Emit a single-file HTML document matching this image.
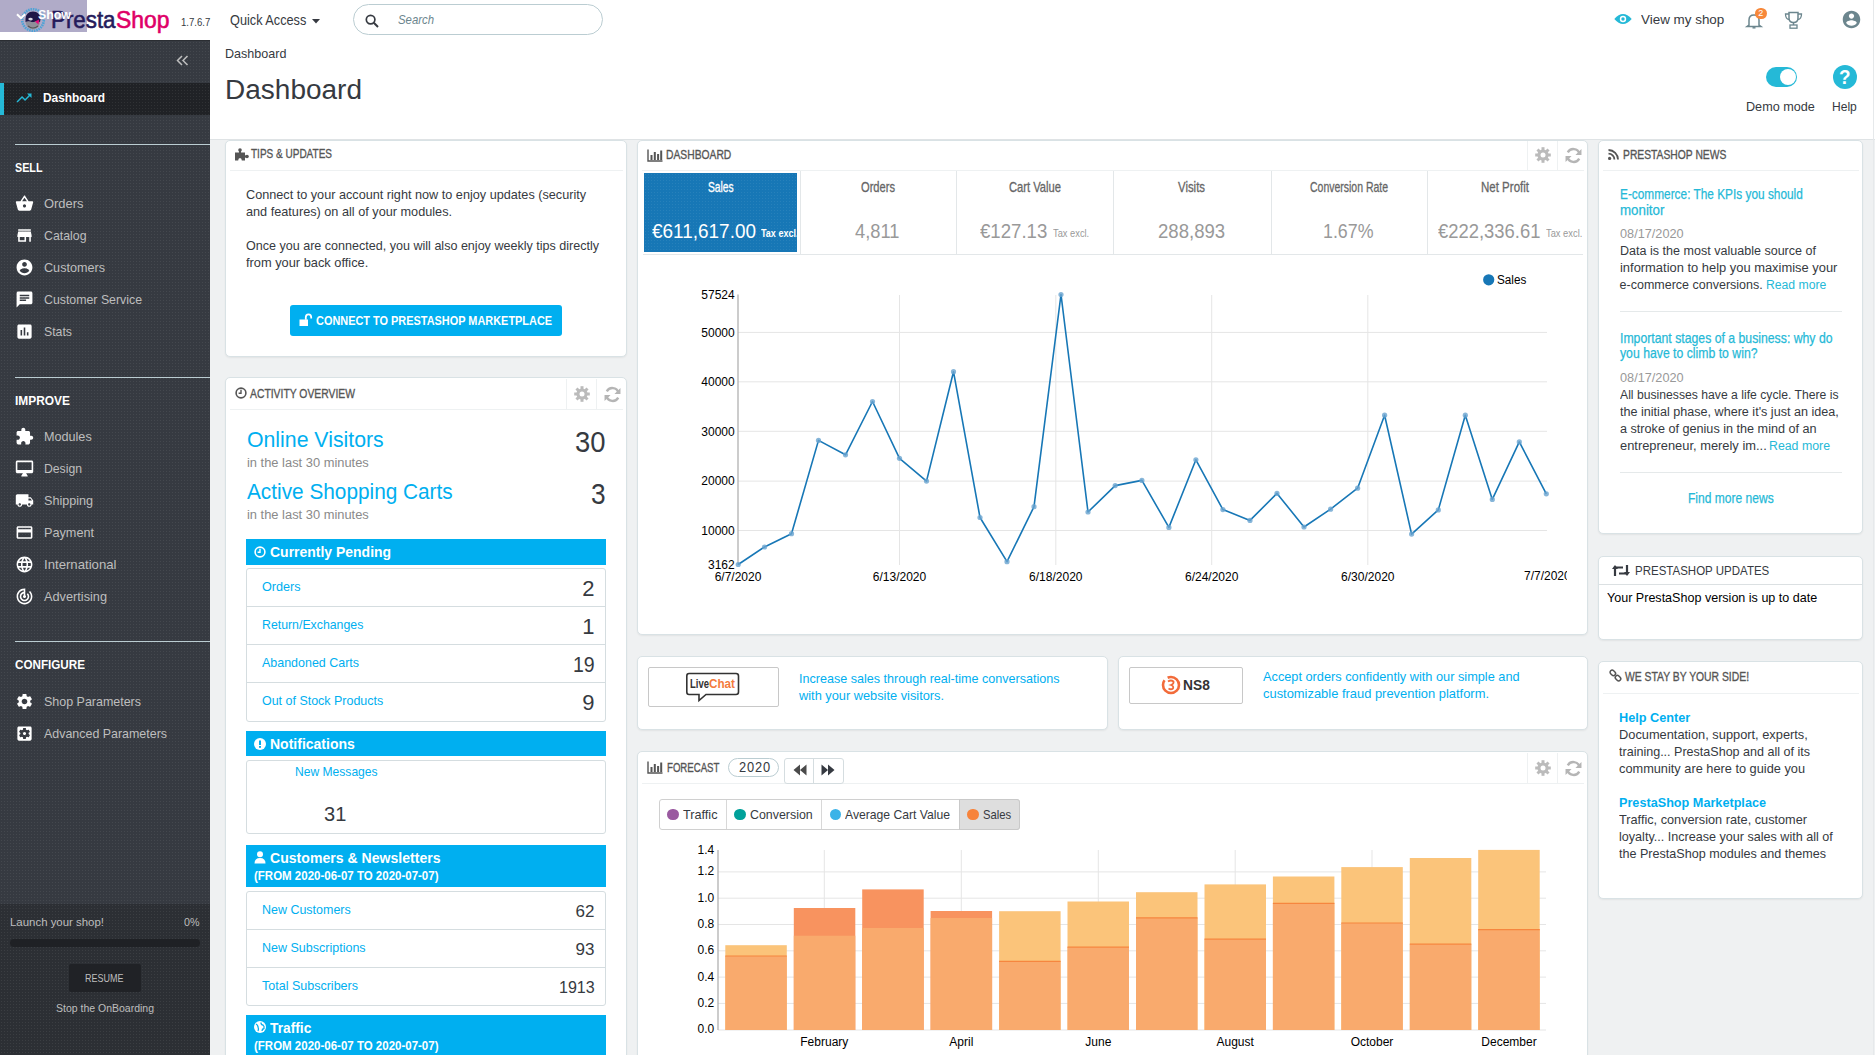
<!DOCTYPE html>
<html><head><meta charset="utf-8"><title>Dashboard</title>
<style>
*{box-sizing:border-box;margin:0;padding:0}
html,body{width:1875px;height:1055px;overflow:hidden}
body{font-family:"Liberation Sans",sans-serif;background:#eff1f2;position:relative}
.a{position:absolute}
.t{position:absolute;white-space:nowrap;transform-origin:0 0}
svg.a{overflow:visible}
</style></head><body>
<div class="a" style="left:0px;top:0px;width:1875px;height:40px;background:#fff"></div>
<div class="a" style="left:0px;top:0px;width:87px;height:32px;background:#b0abc8"></div>
<svg class="a" style="left:20px;top:7px" width="26" height="26" viewBox="0 0 26 26"><circle cx="13" cy="13" r="10.8" fill="none" stroke="#4ea3d6" stroke-width="2.6" stroke-dasharray="1.6 0.8"/><path d="M5.5 12 Q6 4.5 13 4.5 Q20 4.5 20.5 12 L20 15 Q16 14 13 15.5 Q9 14 5.5 15z" fill="#1f1747"/><path d="M5.5 15 Q9 14 13 15.5 Q16 14 20 15 Q19.5 22 13 22.5 Q6.5 22 5.5 15z" fill="#8f8f99"/><path d="M8 12 Q10.5 9.5 13 12 Q11 15 8 12z" fill="#d9d9e3"/><path d="M15 14.5 L19 12.5 L18.5 17.5z" fill="#e5067a"/><path d="M8 19 Q13 23 18 19" stroke="#555" stroke-width="1.2" fill="none"/></svg>
<div class="t" style="left:51.00px;top:4.70px;font-size:24px;line-height:30px;color:#251b5b;transform:scaleX(0.9299);-webkit-text-stroke:0.6px #251b5b">Presta</div>
<div class="t" style="left:115.60px;top:4.70px;font-size:24px;line-height:30px;color:#df0067;transform:scaleX(0.9545);-webkit-text-stroke:0.6px #df0067">Shop</div>
<svg class="a" style="left:16px;top:13px" width="10" height="7" viewBox="0 0 10 7"><path d="M1 1.2 L5 5.2 L9 1.2" stroke="#fff" stroke-width="2" fill="none"/></svg>
<div class="t" style="left:37.50px;top:7.30px;font-size:13px;line-height:16px;color:#fff;font-weight:bold;transform:scaleX(0.9520);">Show</div>
<div class="t" style="left:180.70px;top:15.30px;font-size:11px;line-height:14px;color:#363a41;transform:scaleX(0.8710);">1.7.6.7</div>
<div class="t" style="left:229.60px;top:11.30px;font-size:14px;line-height:18px;color:#363a41;transform:scaleX(0.9080);">Quick Access</div>
<svg class="a" style="left:311.5px;top:18.5px" width="8" height="5" viewBox="0 0 8 5"><path d="M0 0 L8 0 L4 4.5z" fill="#363a41"/></svg>
<div class="a" style="left:353px;top:4px;width:250px;height:31px;border:1px solid #bbcdd2;border-radius:16px"></div>
<svg class="a" style="left:365px;top:13.5px" width="14" height="14" viewBox="0 0 14 14"><circle cx="5.6" cy="5.6" r="4.3" stroke="#363a41" stroke-width="1.7" fill="none"/><path d="M8.8 8.8 L13 13" stroke="#363a41" stroke-width="2"/></svg>
<div class="t" style="left:398.00px;top:11.80px;font-size:13px;line-height:16px;color:#6c868e;font-style:italic;transform:scaleX(0.8740);">Search</div>
<svg class="a" style="left:1614px;top:12.5px" width="18" height="12" viewBox="0 0 18 12"><path d="M0.3 6 Q9 -4 17.7 6 Q9 16 0.3 6z" fill="#25b9d7"/><circle cx="9" cy="6" r="3.2" fill="#fff"/><circle cx="9" cy="6" r="1.7" fill="#25b9d7"/></svg>
<div class="t" style="left:1641.00px;top:10.80px;font-size:13.5px;line-height:17px;color:#363a41;transform:scaleX(0.9942);">View my shop</div>
<svg class="a" style="left:1746px;top:12px" width="16" height="17" viewBox="0 0 16 17"><path d="M3 13 V8 Q3 3 8 3 Q13 3 13 8 V13 L15 14.5 H1 Z" stroke="#6c868e" stroke-width="1.5" fill="none"/><path d="M6.5 15.8 h3" stroke="#6c868e" stroke-width="1.5"/></svg>
<div class="a" style="left:1755px;top:7.5px;width:11.5px;height:11.5px;border-radius:6px;background:#f7883a"></div>
<div class="t" style="left:1758.20px;top:7.80px;font-size:9px;line-height:11px;color:#fff;">2</div>
<svg class="a" style="left:1784px;top:11px" width="19" height="18" viewBox="0 0 19 18"><path d="M5 1.5 H14 V7 Q14 11.5 9.5 11.5 Q5 11.5 5 7 Z" stroke="#6c868e" stroke-width="1.5" fill="none"/><path d="M5 3 H1.5 Q1.5 8 5 8.5 M14 3 H17.5 Q17.5 8 14 8.5" stroke="#6c868e" stroke-width="1.3" fill="none"/><path d="M9.5 11.5 V14" stroke="#6c868e" stroke-width="1.5"/><rect x="6" y="14" width="7" height="3.2" stroke="#6c868e" stroke-width="1.3" fill="none"/></svg>
<svg class="a" style="left:1840.5px;top:9px" width="21" height="21" viewBox="0 0 24 24"><path d="M12 2C6.48 2 2 6.48 2 12s4.48 10 10 10 10-4.480 10-10S17.52 2 12 2zm0 3c1.66 0 3 1.34 3 3s-1.34 3-3 3-3-1.34-3-3 1.34-3 3-3zm0 14.2c-2.5 0-4.71-1.28-6-3.22.03-1.99 4-3.08 6-3.08 1.99 0 5.97 1.09 6 3.08-1.29 1.94-3.5 3.22-6 3.22z" fill="#6c868e"/></svg>
<div class="a" style="left:210px;top:40px;width:1665px;height:100px;background:#fff;border-bottom:1px solid #dfe3e5"></div>
<div class="t" style="left:225.30px;top:45.50px;font-size:13px;line-height:16px;color:#363a41;transform:scaleX(0.9655);">Dashboard</div>
<div class="t" style="left:225.00px;top:73.00px;font-size:27px;line-height:34px;color:#363a41;transform:scaleX(1.0372);">Dashboard</div>
<div class="a" style="left:1765.5px;top:67px;width:31.5px;height:20px;border-radius:10px;background:#25b9d7"></div>
<div class="a" style="left:1779.5px;top:69px;width:16px;height:16px;border-radius:8px;background:#fff"></div>
<div class="t" style="left:1745.80px;top:99.00px;font-size:13px;line-height:16px;color:#363a41;transform:scaleX(0.9716);">Demo mode</div>
<div class="a" style="left:1833px;top:65px;width:24px;height:24px;border-radius:12px;background:#25b9d7"></div>
<div class="t" style="left:1839.45px;top:64.90px;font-size:20px;line-height:25px;color:#fff;font-weight:bold;transform:scaleX(0.9413);">?</div>
<div class="t" style="left:1832.40px;top:99.00px;font-size:13px;line-height:16px;color:#363a41;transform:scaleX(0.9276);">Help</div>
<div class="a" style="left:1873px;top:0px;width:1px;height:1055px;background:#e6e9eb"></div>
<div class="a" style="left:0px;top:40px;width:210px;height:1015px;background-color:#363a41;background-image:radial-gradient(rgba(255,255,255,.07) 0.7px,transparent 1px);background-size:3px 3px;border-top:1px solid #2a2d32"></div>
<svg class="a" style="left:176px;top:55px" width="13" height="11" viewBox="0 0 13 11"><path d="M6 1 L1.5 5.5 L6 10 M11.5 1 L7 5.5 L11.5 10" stroke="#bebebe" stroke-width="1.5" fill="none"/></svg>
<div class="a" style="left:0px;top:83px;width:210px;height:32px;background-color:#202226;background-image:radial-gradient(rgba(255,255,255,.07) 0.7px,transparent 1px);background-size:3px 3px;"></div>
<div class="a" style="left:0px;top:83px;width:4px;height:32px;background:#25b9d7"></div>
<svg class="a" style="left:15px;top:89px" width="18" height="18" viewBox="0 0 24 24"><path d="M16 6l2.29 2.29-4.88 4.88-4-4L2 16.59 3.41 18l6-6 4 4 6.3-6.29L22 12V6z" fill="#25b9d7"/></svg>
<div class="t" style="left:43.20px;top:90.40px;font-size:13px;line-height:16px;color:#fff;font-weight:bold;transform:scaleX(0.9131);">Dashboard</div>
<div class="a" style="left:15px;top:144px;width:195px;height:1px;background:#bbcdd2"></div>
<div class="a" style="left:15px;top:377px;width:195px;height:1px;background:#bbcdd2"></div>
<div class="a" style="left:15px;top:641px;width:195px;height:1px;background:#bbcdd2"></div>
<div class="t" style="left:15.00px;top:159.60px;font-size:12.5px;line-height:16px;color:#fff;font-weight:bold;transform:scaleX(0.8608);">SELL</div>
<div class="t" style="left:15.00px;top:392.50px;font-size:12.5px;line-height:16px;color:#fff;font-weight:bold;transform:scaleX(0.9541);">IMPROVE</div>
<div class="t" style="left:15.00px;top:657.00px;font-size:12.5px;line-height:16px;color:#fff;font-weight:bold;transform:scaleX(0.9333);">CONFIGURE</div>
<svg class="a" style="left:14.5px;top:194px" width="19" height="19" viewBox="0 0 24 24"><path d="M17.21 9l-4.38-6.56c-.19-.28-.51-.42-.83-.42-.32 0-.64.14-.83.43L6.79 9H2c-.55 0-1 .45-1 1 0 .09.01.18.04.27l2.540 9.27c.23.84 1 1.46 1.92 1.46h13c.92 0 1.69-.62 1.93-1.46l2.54-9.27L23 10c0-.55-.45-1-1-1h-4.79zM9 9l3-4.4L15 9H9zm3 8c-1.1 0-2-.9-2-2s.9-2 2-2 2 .9 2 2-.9 2-2 2z" fill="#fff"/></svg>
<div class="t" style="left:44.30px;top:196.20px;font-size:13px;line-height:16px;color:#bebebe;transform:scaleX(0.9942);">Orders</div>
<svg class="a" style="left:14.5px;top:226px" width="19" height="19" viewBox="0 0 24 24"><path d="M20 4H4v2h16V4zm1 10v-2l-1-5H4l-1 5v2h1v6h10v-6h4v6h2v-6h1zm-9 4H6v-4h6v4z" fill="#fff"/></svg>
<div class="t" style="left:44.30px;top:228.20px;font-size:13px;line-height:16px;color:#bebebe;transform:scaleX(0.9485);">Catalog</div>
<svg class="a" style="left:14.5px;top:258px" width="19" height="19" viewBox="0 0 24 24"><path d="M12 2C6.48 2 2 6.48 2 12s4.48 10 10 10 10-4.480 10-10S17.52 2 12 2zm0 3c1.66 0 3 1.34 3 3s-1.34 3-3 3-3-1.34-3-3 1.34-3 3-3zm0 14.2c-2.5 0-4.71-1.28-6-3.22.03-1.99 4-3.08 6-3.08 1.99 0 5.97 1.09 6 3.08-1.29 1.94-3.5 3.22-6 3.22z" fill="#fff"/></svg>
<div class="t" style="left:44.30px;top:260.20px;font-size:13px;line-height:16px;color:#bebebe;transform:scaleX(0.9706);">Customers</div>
<svg class="a" style="left:14.5px;top:290px" width="19" height="19" viewBox="0 0 24 24"><path d="M20 2H4c-1.1 0-1.99.9-1.99 2L2 22l4-4h14c1.1 0 2-.9 2-2V4c0-1.1-.9-2-2-2zM6 9h12v2H6V9zm8 5H6v-2h8v2zm4-6H6V6h12v2z" fill="#fff"/></svg>
<div class="t" style="left:44.30px;top:292.20px;font-size:13px;line-height:16px;color:#bebebe;transform:scaleX(0.9486);">Customer Service</div>
<svg class="a" style="left:14.5px;top:322px" width="19" height="19" viewBox="0 0 24 24"><path d="M19 3H5c-1.1 0-2 .9-2 2v14c0 1.1.9 2 2 2h14c1.1 0 2-.9 2-2V5c0-1.1-.9-2-2-2zM9 17H7v-7h2v7zm4 0h-2V7h2v10zm4 0h-2v-4h2v4z" fill="#fff"/></svg>
<div class="t" style="left:44.30px;top:324.20px;font-size:13px;line-height:16px;color:#bebebe;transform:scaleX(0.9452);">Stats</div>
<svg class="a" style="left:14.5px;top:427px" width="19" height="19" viewBox="0 0 24 24"><path d="M20.5 11H19V7c0-1.1-.9-2-2-2h-4V3.5C13 2.12 11.88 1 10.5 1S8 2.12 8 3.5V5H4c-1.1 0-1.99.9-1.99 2v3.8H3.5c1.49 0 2.7 1.21 2.7 2.7s-1.21 2.7-2.7 2.7H2V20c0 1.1.9 2 2 2h3.8v-1.5c0-1.49 1.21-2.7 2.7-2.7 1.49 0 2.7 1.21 2.7 2.7V22H17c1.1 0 2-.9 2-2v-4h1.5c1.38 0 2.5-1.12 2.5-2.5S21.88 11 20.5 11z" fill="#fff"/></svg>
<div class="t" style="left:44.30px;top:429.20px;font-size:13px;line-height:16px;color:#bebebe;transform:scaleX(0.9708);">Modules</div>
<svg class="a" style="left:14.5px;top:459px" width="19" height="19" viewBox="0 0 24 24"><path d="M21 2H3c-1.1 0-2 .9-2 2v12c0 1.1.9 2 2 2h7l-2 3v1h8v-1l-2-3h7c1.1 0 2-.9 2-2V4c0-1.1-.9-2-2-2zm0 12H3V4h18v10z" fill="#fff"/></svg>
<div class="t" style="left:44.30px;top:461.20px;font-size:13px;line-height:16px;color:#bebebe;transform:scaleX(0.9391);">Design</div>
<svg class="a" style="left:14.5px;top:491px" width="19" height="19" viewBox="0 0 24 24"><path d="M20 8h-3V4H3c-1.1 0-2 .9-2 2v11h2c0 1.66 1.34 3 3 3s3-1.34 3-3h6c0 1.66 1.34 3 3 3s3-1.34 3-3h2v-5l-3-4zM6 18.5c-.83 0-1.5-.67-1.5-1.5s.67-1.5 1.5-1.5 1.5.67 1.5 1.5-.67 1.5-1.5 1.5zm13.5-9l1.96 2.5H17V9.5h2.5zm-1.5 9c-.83 0-1.5-.67-1.5-1.5s.67-1.5 1.5-1.5 1.5.67 1.5 1.5-.67 1.5-1.5 1.5z" fill="#fff"/></svg>
<div class="t" style="left:44.30px;top:493.20px;font-size:13px;line-height:16px;color:#bebebe;transform:scaleX(0.9684);">Shipping</div>
<svg class="a" style="left:14.5px;top:523px" width="19" height="19" viewBox="0 0 24 24"><path d="M20 4H4c-1.11 0-1.99.89-1.99 2L2 18c0 1.11.89 2 2 2h16c1.11 0 2-.89 2-2V6c0-1.11-.89-2-2-2zm0 14H4v-6h16v6zm0-10H4V6h16v2z" fill="#fff"/></svg>
<div class="t" style="left:44.30px;top:525.20px;font-size:13px;line-height:16px;color:#bebebe;transform:scaleX(0.9746);">Payment</div>
<svg class="a" style="left:14.5px;top:555px" width="19" height="19" viewBox="0 0 24 24"><path d="M11.99 2C6.47 2 2 6.48 2 12s4.47 10 9.99 10C17.52 22 22 17.52 22 12S17.52 2 11.99 2zm6.93 6h-2.95c-.32-1.25-.78-2.45-1.38-3.560 1.84.63 3.37 1.91 4.33 3.56zM12 4.04c.83 1.2 1.48 2.53 1.91 3.96h-3.82c.43-1.43 1.08-2.76 1.91-3.96zM4.26 14C4.1 13.36 4 12.69 4 12s.1-1.36.26-2h3.38c-.08.66-.14 1.32-.14 2 0 .68.06 1.34.14 2H4.26zm.82 2h2.95c.32 1.25.78 2.45 1.38 3.56-1.84-.63-3.37-1.9-4.33-3.56zm2.95-8H5.08c.96-1.66 2.49-2.93 4.33-3.56C8.81 5.55 8.35 6.75 8.03 8zM12 19.96c-.83-1.2-1.48-2.53-1.910-3.96h3.82c-.43 1.43-1.08 2.76-1.91 3.96zM14.34 14H9.66c-.09-.66-.16-1.32-.16-2 0-.68.07-1.35.16-2h4.68c.09.65.16 1.32.16 2 0 .68-.07 1.34-.16 2zm.25 5.56c.6-1.11 1.06-2.31 1.38-3.56h2.95c-.96 1.65-2.49 2.93-4.33 3.56zM16.36 14c.08-.66.14-1.32.14-2 0-.68-.06-1.34-.14-2h3.38c.16.64.26 1.31.26 2s-.1 1.36-.26 2h-3.38z" fill="#fff"/></svg>
<div class="t" style="left:44.30px;top:557.20px;font-size:13px;line-height:16px;color:#bebebe;transform:scaleX(1.0133);">International</div>
<svg class="a" style="left:14.5px;top:587px" width="19" height="19" viewBox="0 0 24 24"><path d="M19.07 4.93l-1.41 1.41C19.1 7.79 20 9.79 20 12c0 4.42-3.58 8-8 8s-8-3.58-8-8c0-4.08 3.05-7.44 7-7.93v2.02C8.16 6.57 6 9.03 6 12c0 3.31 2.69 6 6 6s6-2.69 6-6c0-1.66-.67-3.160-1.76-4.24l-1.41 1.41C15.55 9.9 16 10.9 16 12c0 2.21-1.79 4-4 4s-4-1.79-4-4c0-1.86 1.28-3.41 3-3.86v2.14c-.6.35-1 .98-1 1.72 0 1.1.9 2 2 2s2-.9 2-2c0-.74-.4-1.38-1-1.72V2h-1C6.48 2 2 6.48 2 12s4.48 10 10 10 10-4.48 10-10c0-2.76-1.12-5.26-2.93-7.07z" fill="#fff"/></svg>
<div class="t" style="left:44.30px;top:589.20px;font-size:13px;line-height:16px;color:#bebebe;transform:scaleX(0.9797);">Advertising</div>
<svg class="a" style="left:14.5px;top:692px" width="19" height="19" viewBox="0 0 24 24"><path d="M19.14 12.94c.04-.3.06-.61.06-.94 0-.32-.02-.64-.07-.94l2.03-1.58c.18-.14.23-.41.12-.61l-1.92-3.32c-.12-.22-.37-.29-.59-.22l-2.39.96c-.5-.38-1.03-.7-1.62-.94l-.36-2.54c-.04-.24-.24-.41-.48-.41h-3.84c-.24 0-.43.17-.47.41l-.36 2.54c-.59.24-1.13.57-1.62.94l-2.39-.96c-.22-.08-.47 0-.59.22L2.74 8.87c-.12.21-.08.47.12.61l2.03 1.58c-.05.3-.09.63-.09.94s.02.64.07.94l-2.03 1.58c-.18.14-.23.41-.12.61l1.92 3.32c.12.22.37.29.59.22l2.39-.96c.5.38 1.03.7 1.62.94l.36 2.54c.05.24.24.41.48.41h3.84c.24 0 .44-.17.47-.41l.36-2.54c.59-.24 1.13-.56 1.62-.94l2.39.96c.22.08.47 0 .59-.22l1.92-3.32c.12-.22.07-.47-.12-.61l-2.01-1.58zM12 15.6c-1.98 0-3.6-1.62-3.6-3.6s1.62-3.6 3.6-3.6 3.6 1.62 3.6 3.6-1.62 3.6-3.6 3.6z" fill="#fff"/></svg>
<div class="t" style="left:44.30px;top:694.20px;font-size:13px;line-height:16px;color:#bebebe;transform:scaleX(0.9589);">Shop Parameters</div>
<svg class="a" style="left:14.5px;top:724px" width="19" height="19" viewBox="0 0 24 24"><path d="M12 10c-1.1 0-2 .9-2 2s.9 2 2 2 2-.9 2-2-.9-2-2-2zm7-7H5c-1.11 0-2 .9-2 2v14c0 1.1.89 2 2 2h14c1.11 0 2-.9 2-2V5c0-1.1-.89-2-2-2zm-1.75 9c0 .23-.02.46-.05.68l1.48 1.16c.13.11.17.3.08.45l-1.4 2.42c-.09.15-.27.21-.43.15l-1.74-.7c-.36.28-.76.51-1.18.69l-.26 1.85c-.03.17-.18.3-.35.3h-2.8c-.17 0-.32-.13-.35-.29l-.26-1.85c-.43-.18-.82-.41-1.18-.69l-1.74.7c-.16.06-.34 0-.43-.15l-1.4-2.42c-.09-.15-.05-.34.08-.45l1.48-1.16c-.03-.23-.05-.46-.05-.69 0-.23.02-.46.05-.68l-1.48-1.16c-.13-.11-.17-.3-.08-.45l1.4-2.42c.09-.15.27-.21.43-.15l1.74.7c.36-.28.76-.51 1.18-.69l.26-1.85c.03-.17.18-.3.35-.3h2.8c.17 0 .32.13.35.29l.26 1.85c.43.18.82.41 1.18.69l1.74-.7c.16-.06.34 0 .43.15l1.4 2.42c.09.15.05.34-.08.45l-1.48 1.16c.03.23.05.46.05.69z" fill="#fff"/></svg>
<div class="t" style="left:44.30px;top:726.20px;font-size:13px;line-height:16px;color:#bebebe;transform:scaleX(0.9563);">Advanced Parameters</div>
<div class="a" style="left:0px;top:904px;width:210px;height:151px;background-color:#2c2f34;background-image:radial-gradient(rgba(255,255,255,.07) 0.7px,transparent 1px);background-size:3px 3px;"></div>
<div class="t" style="left:10.00px;top:915.00px;font-size:11px;line-height:14px;color:#bebebe;transform:scaleX(1.0386);">Launch your shop!</div>
<div class="t" style="left:184.00px;top:915.00px;font-size:11px;line-height:14px;color:#bebebe;transform:scaleX(0.9749);">0%</div>
<div class="a" style="left:10px;top:939px;width:190px;height:8px;border-radius:4px;background:#1f2125"></div>
<div class="a" style="left:69px;top:964px;width:72px;height:28px;border-radius:2px;background:#202226"></div>
<div class="t" style="left:85.25px;top:971.80px;font-size:10.5px;line-height:13px;color:#bebebe;transform:scaleX(0.8570);">RESUME</div>
<div class="t" style="left:56.00px;top:1000.50px;font-size:11px;line-height:14px;color:#bebebe;transform:scaleX(0.9539);">Stop the OnBoarding</div>
<div class="a" style="left:225px;top:139.5px;width:402px;height:217px;background:#fff;border:1px solid #d9e2e5;border-radius:5px;box-shadow:0 1px 2px rgba(0,0,0,.06);"></div>
<div class="a" style="left:230px;top:170px;width:393px;height:1px;background:#eef1f2"></div>
<svg class="a" style="left:234.6px;top:148px" width="14" height="13" viewBox="0 0 14 13"><circle cx="5" cy="2" r="1.8" fill="#555"/><rect x="4" y="2" width="2" height="3" fill="#555"/><path d="M0 4.5 H10 V7.5 H11 V9.5 H10 V12.5 H6.8 Q6.8 10 5 10 Q3.2 10 3.2 12.5 H0 Z" fill="#555"/><circle cx="12" cy="8.5" r="1.8" fill="#555"/></svg>
<div class="t" style="left:251.00px;top:145.00px;font-size:13.6px;line-height:17px;color:#555;transform:scaleX(0.7362);-webkit-text-stroke:0.35px #555">TIPS &amp; UPDATES</div>
<div class="t" style="left:246.20px;top:187.00px;font-size:13px;line-height:16px;color:#363a41;transform:scaleX(0.9744);">Connect to your account right now to enjoy updates (security</div>
<div class="t" style="left:246.20px;top:203.80px;font-size:13px;line-height:16px;color:#363a41;transform:scaleX(0.9763);">and features) on all of your modules.</div>
<div class="t" style="left:246.20px;top:237.90px;font-size:13px;line-height:16px;color:#363a41;transform:scaleX(0.9655);">Once you are connected, you will also enjoy weekly tips directly</div>
<div class="t" style="left:246.20px;top:254.80px;font-size:13px;line-height:16px;color:#363a41;transform:scaleX(0.9860);">from your back office.</div>
<div class="a" style="left:290px;top:305px;width:271.5px;height:30.5px;background:#00aff0;border-radius:3px"></div>
<svg class="a" style="left:299px;top:313px" width="14" height="14" viewBox="0 0 14 14"><rect x="0.5" y="6.5" width="8.5" height="6.5" fill="#fff"/><path d="M6.8 6.8 V4.2 Q6.8 1.3 9.5 1.3 Q12.2 1.3 12.2 4.2 V5.5" stroke="#fff" stroke-width="1.8" fill="none"/></svg>
<div class="t" style="left:315.90px;top:312.50px;font-size:13px;line-height:16px;color:#fff;font-weight:bold;transform:scaleX(0.8403);">CONNECT TO PRESTASHOP MARKETPLACE</div>
<div class="a" style="left:225px;top:377px;width:402px;height:700px;background:#fff;border:1px solid #d9e2e5;border-radius:5px;box-shadow:0 1px 2px rgba(0,0,0,.06);"></div>
<div class="a" style="left:230px;top:409px;width:393px;height:1px;background:#eef1f2"></div>
<svg class="a" style="left:235px;top:387px" width="12" height="12" viewBox="0 0 12 12"><circle cx="6" cy="6" r="4.9" stroke="#555" stroke-width="1.6" fill="none"/><path d="M6 2.8 V6.3 H3.6" stroke="#555" stroke-width="1.4" fill="none"/></svg>
<div class="t" style="left:249.80px;top:384.70px;font-size:13.6px;line-height:17px;color:#555;transform:scaleX(0.7625);-webkit-text-stroke:0.35px #555">ACTIVITY OVERVIEW</div>
<div class="a" style="left:566px;top:379px;width:1px;height:30px;background:#eef1f2"></div>
<div class="a" style="left:596px;top:379px;width:1px;height:30px;background:#eef1f2"></div>
<svg class="a" style="left:574px;top:386px" width="16" height="16" viewBox="0 0 16 16"><rect x="6.5" y="0.2" width="3" height="3.5" fill="#bbb" transform="rotate(0 8 8)"/><rect x="6.5" y="0.2" width="3" height="3.5" fill="#bbb" transform="rotate(45 8 8)"/><rect x="6.5" y="0.2" width="3" height="3.5" fill="#bbb" transform="rotate(90 8 8)"/><rect x="6.5" y="0.2" width="3" height="3.5" fill="#bbb" transform="rotate(135 8 8)"/><rect x="6.5" y="0.2" width="3" height="3.5" fill="#bbb" transform="rotate(180 8 8)"/><rect x="6.5" y="0.2" width="3" height="3.5" fill="#bbb" transform="rotate(225 8 8)"/><rect x="6.5" y="0.2" width="3" height="3.5" fill="#bbb" transform="rotate(270 8 8)"/><rect x="6.5" y="0.2" width="3" height="3.5" fill="#bbb" transform="rotate(315 8 8)"/><circle cx="8" cy="8" r="5.6" fill="#bbb"/><circle cx="8" cy="8" r="2.5" fill="#fff"/></svg>
<svg class="a" style="left:603.5px;top:386px" width="17" height="17" viewBox="0 0 16 16"><path d="M13.6 6.2 A6 6 0 0 0 2.6 5 M2.4 9.8 A6 6 0 0 0 13.4 11" stroke="#b5b5b5" stroke-width="2.2" fill="none"/><path d="M15.5 1.8 V7.5 H9.8z M0.5 14.2 V8.5 H6.2z" fill="#b5b5b5"/></svg>
<div class="t" style="left:246.50px;top:425.70px;font-size:22px;line-height:28px;color:#00aff0;transform:scaleX(0.9665);">Online Visitors</div>
<div class="t" style="left:575.00px;top:424.00px;font-size:29px;line-height:36px;color:#363a41;transform:scaleX(0.9455);">30</div>
<div class="t" style="left:246.50px;top:454.90px;font-size:12.5px;line-height:16px;color:#8a8a8a;transform:scaleX(1.0311);">in the last 30 minutes</div>
<div class="t" style="left:246.50px;top:478.10px;font-size:22px;line-height:28px;color:#00aff0;transform:scaleX(0.9450);">Active Shopping Carts</div>
<div class="t" style="left:590.90px;top:476.40px;font-size:29px;line-height:36px;color:#363a41;transform:scaleX(0.9052);">3</div>
<div class="t" style="left:246.50px;top:507.00px;font-size:12.5px;line-height:16px;color:#8a8a8a;transform:scaleX(1.0311);">in the last 30 minutes</div>
<div class="a" style="left:245.8px;top:539.2px;width:360.2px;height:25.6px;background:#00aff0"></div>
<svg class="a" style="left:254px;top:546px" width="12" height="12" viewBox="0 0 12 12"><circle cx="6" cy="6" r="4.9" stroke="#fff" stroke-width="1.6" fill="none"/><path d="M6 2.8 V6.3 H3.6" stroke="#fff" stroke-width="1.4" fill="none"/></svg>
<div class="t" style="left:269.70px;top:542.30px;font-size:15px;line-height:19px;color:#fff;font-weight:bold;transform:scaleX(0.9315);">Currently Pending</div>
<div class="a" style="left:245.8px;top:568.4px;width:360.2px;height:153.5px;background:#fff;border:1px solid #d5dde0;border-radius:3px"></div>
<div class="t" style="left:262.00px;top:579.40px;font-size:13px;line-height:16px;color:#00aff0;transform:scaleX(0.9716);">Orders</div>
<div class="t" style="left:582.26px;top:574.90px;font-size:22px;line-height:28px;color:#363a41;">2</div>
<div class="a" style="left:246.8px;top:606.4px;width:358.2px;height:1px;background:#d5dde0"></div>
<div class="t" style="left:262.00px;top:617.40px;font-size:13px;line-height:16px;color:#00aff0;transform:scaleX(0.9472);">Return/Exchanges</div>
<div class="t" style="left:582.26px;top:612.90px;font-size:22px;line-height:28px;color:#363a41;">1</div>
<div class="a" style="left:246.8px;top:644.4px;width:358.2px;height:1px;background:#d5dde0"></div>
<div class="t" style="left:262.00px;top:655.40px;font-size:13px;line-height:16px;color:#00aff0;transform:scaleX(0.9587);">Abandoned Carts</div>
<div class="t" style="left:572.80px;top:650.90px;font-size:22px;line-height:28px;color:#363a41;transform:scaleX(0.8868);">19</div>
<div class="a" style="left:246.8px;top:682.4px;width:358.2px;height:1px;background:#d5dde0"></div>
<div class="t" style="left:262.00px;top:693.40px;font-size:13px;line-height:16px;color:#00aff0;transform:scaleX(0.9585);">Out of Stock Products</div>
<div class="t" style="left:582.26px;top:688.90px;font-size:22px;line-height:28px;color:#363a41;">9</div>
<div class="a" style="left:245.8px;top:731.1px;width:360.2px;height:25.4px;background:#00aff0"></div>
<svg class="a" style="left:254px;top:738px" width="12" height="12" viewBox="0 0 12 12"><circle cx="6" cy="6" r="6" fill="#fff"/><rect x="5" y="2.5" width="2" height="4.5" fill="#00aff0"/><rect x="5" y="8" width="2" height="1.8" fill="#00aff0"/></svg>
<div class="t" style="left:269.70px;top:734.30px;font-size:15px;line-height:19px;color:#fff;font-weight:bold;transform:scaleX(0.9336);">Notifications</div>
<div class="a" style="left:245.8px;top:760.3px;width:360.2px;height:74px;background:#fff;border:1px solid #d5dde0;border-radius:3px"></div>
<div class="t" style="left:295.10px;top:764.40px;font-size:13px;line-height:16px;color:#00aff0;transform:scaleX(0.9295);">New Messages</div>
<div class="t" style="left:324.30px;top:800.70px;font-size:21px;line-height:26px;color:#363a41;transform:scaleX(0.9547);">31</div>
<div class="a" style="left:245.8px;top:845.4px;width:360.2px;height:41.3px;background:#00aff0"></div>
<svg class="a" style="left:254px;top:851px" width="12" height="13" viewBox="0 0 12 13"><circle cx="6" cy="3.3" r="3" fill="#fff"/><path d="M0.5 12.5 Q0.5 7 6 7 Q11.5 7 11.5 12.5z" fill="#fff"/></svg>
<div class="t" style="left:269.70px;top:848.00px;font-size:15px;line-height:19px;color:#fff;font-weight:bold;transform:scaleX(0.9388);">Customers &amp; Newsletters</div>
<div class="t" style="left:253.50px;top:867.60px;font-size:12.5px;line-height:16px;color:#fff;font-weight:bold;transform:scaleX(0.9199);">(FROM 2020-06-07 TO 2020-07-07)</div>
<div class="a" style="left:245.8px;top:890.5px;width:360.2px;height:115.5px;background:#fff;border:1px solid #d5dde0;border-radius:3px"></div>
<div class="t" style="left:262.00px;top:901.50px;font-size:13px;line-height:16px;color:#00aff0;transform:scaleX(0.9593);">New Customers</div>
<div class="t" style="left:575.59px;top:900.50px;font-size:17px;line-height:21px;color:#363a41;">62</div>
<div class="a" style="left:246.8px;top:928.5px;width:358.2px;height:1px;background:#d5dde0"></div>
<div class="t" style="left:262.00px;top:939.50px;font-size:13px;line-height:16px;color:#00aff0;transform:scaleX(0.9623);">New Subscriptions</div>
<div class="t" style="left:575.59px;top:938.50px;font-size:17px;line-height:21px;color:#363a41;">93</div>
<div class="a" style="left:246.8px;top:966.5px;width:358.2px;height:1px;background:#d5dde0"></div>
<div class="t" style="left:262.00px;top:977.50px;font-size:13px;line-height:16px;color:#00aff0;transform:scaleX(0.9628);">Total Subscribers</div>
<div class="t" style="left:558.80px;top:976.50px;font-size:17px;line-height:21px;color:#363a41;transform:scaleX(0.9440);">1913</div>
<div class="a" style="left:245.8px;top:1015.3px;width:360.2px;height:45px;background:#00aff0"></div>
<svg class="a" style="left:254px;top:1021px" width="12" height="12" viewBox="0 0 12 12"><circle cx="6" cy="6" r="6" fill="#fff"/><path d="M2 3 Q4 4 4 6 Q5 8 4 10 M7 1.5 Q7 4 9 4 Q10.5 5 10 7.5 Q8 8 8 10" stroke="#00aff0" stroke-width="1.3" fill="none"/></svg>
<div class="t" style="left:269.70px;top:1017.90px;font-size:15px;line-height:19px;color:#fff;font-weight:bold;transform:scaleX(0.9175);">Traffic</div>
<div class="t" style="left:253.50px;top:1037.50px;font-size:12.5px;line-height:16px;color:#fff;font-weight:bold;transform:scaleX(0.9199);">(FROM 2020-06-07 TO 2020-07-07)</div>
<div class="a" style="left:637px;top:139.5px;width:951px;height:495.5px;background:#fff;border:1px solid #d9e2e5;border-radius:5px;box-shadow:0 1px 2px rgba(0,0,0,.06);"></div>
<div class="a" style="left:642px;top:170px;width:942px;height:1px;background:#eef1f2"></div>
<svg class="a" style="left:646.5px;top:148.5px" width="16" height="13" viewBox="0 0 16 13"><path d="M1 0.5 V12 H15.5" stroke="#555" stroke-width="1.4" fill="none"/><rect x="3.5" y="6" width="2" height="5" fill="#555"/><rect x="6.8" y="3" width="2" height="8" fill="#555"/><rect x="10.1" y="5" width="2" height="6" fill="#555"/><rect x="13.2" y="1.5" width="2" height="9.5" fill="#555"/></svg>
<div class="t" style="left:666.00px;top:145.70px;font-size:13.6px;line-height:17px;color:#555;transform:scaleX(0.7583);-webkit-text-stroke:0.35px #555">DASHBOARD</div>
<div class="a" style="left:1527px;top:141px;width:1px;height:29px;background:#eef1f2"></div>
<div class="a" style="left:1557px;top:141px;width:1px;height:29px;background:#eef1f2"></div>
<svg class="a" style="left:1535px;top:147px" width="16" height="16" viewBox="0 0 16 16"><rect x="6.5" y="0.2" width="3" height="3.5" fill="#bbb" transform="rotate(0 8 8)"/><rect x="6.5" y="0.2" width="3" height="3.5" fill="#bbb" transform="rotate(45 8 8)"/><rect x="6.5" y="0.2" width="3" height="3.5" fill="#bbb" transform="rotate(90 8 8)"/><rect x="6.5" y="0.2" width="3" height="3.5" fill="#bbb" transform="rotate(135 8 8)"/><rect x="6.5" y="0.2" width="3" height="3.5" fill="#bbb" transform="rotate(180 8 8)"/><rect x="6.5" y="0.2" width="3" height="3.5" fill="#bbb" transform="rotate(225 8 8)"/><rect x="6.5" y="0.2" width="3" height="3.5" fill="#bbb" transform="rotate(270 8 8)"/><rect x="6.5" y="0.2" width="3" height="3.5" fill="#bbb" transform="rotate(315 8 8)"/><circle cx="8" cy="8" r="5.6" fill="#bbb"/><circle cx="8" cy="8" r="2.5" fill="#fff"/></svg>
<svg class="a" style="left:1564.5px;top:147px" width="17" height="17" viewBox="0 0 16 16"><path d="M13.6 6.2 A6 6 0 0 0 2.6 5 M2.4 9.8 A6 6 0 0 0 13.4 11" stroke="#b5b5b5" stroke-width="2.2" fill="none"/><path d="M15.5 1.8 V7.5 H9.8z M0.5 14.2 V8.5 H6.2z" fill="#b5b5b5"/></svg>
<div class="a" style="left:643px;top:254px;width:940px;height:1px;background:#e3e7e9"></div>
<div class="a" style="left:799.6px;top:171px;width:1px;height:83px;background:#e3e7e9"></div>
<div class="a" style="left:956.4px;top:171px;width:1px;height:83px;background:#e3e7e9"></div>
<div class="a" style="left:1113.2px;top:171px;width:1px;height:83px;background:#e3e7e9"></div>
<div class="a" style="left:1270.5px;top:171px;width:1px;height:83px;background:#e3e7e9"></div>
<div class="a" style="left:1426.5px;top:171px;width:1px;height:83px;background:#e3e7e9"></div>
<div class="a" style="left:643.9px;top:173.2px;width:153.1px;height:78.4px;background-color:#1777b6;background-image:radial-gradient(rgba(255,255,255,.07) 0.7px,transparent 1px);background-size:3px 3px;"></div>
<div class="t" style="left:707.55px;top:178.30px;font-size:14.5px;line-height:18px;color:#fff;transform:scaleX(0.7086);-webkit-text-stroke:0.3px #fff">Sales</div>
<div class="t" style="left:861.00px;top:178.30px;font-size:14.5px;line-height:18px;color:#666;transform:scaleX(0.7672);-webkit-text-stroke:0.3px #666">Orders</div>
<div class="t" style="left:1008.50px;top:178.30px;font-size:14.5px;line-height:18px;color:#666;transform:scaleX(0.7712);-webkit-text-stroke:0.3px #666">Cart Value</div>
<div class="t" style="left:1178.20px;top:178.30px;font-size:14.5px;line-height:18px;color:#666;transform:scaleX(0.7853);-webkit-text-stroke:0.3px #666">Visits</div>
<div class="t" style="left:1309.50px;top:178.30px;font-size:14.5px;line-height:18px;color:#666;transform:scaleX(0.7222);-webkit-text-stroke:0.3px #666">Conversion Rate</div>
<div class="t" style="left:1481.00px;top:178.30px;font-size:14.5px;line-height:18px;color:#666;transform:scaleX(0.7942);-webkit-text-stroke:0.3px #666">Net Profit</div>
<div class="t" style="left:651.90px;top:218.50px;font-size:19.5px;line-height:24px;color:#fff;transform:scaleX(0.9720);">€611,617.00</div>
<div class="t" style="left:761.20px;top:227.00px;font-size:10.5px;line-height:13px;color:#fff;font-weight:bold;transform:scaleX(0.8604);">Tax excl.</div>
<div class="a" style="left:797px;top:173px;width:3px;height:79px;background:#fff"></div>
<div class="t" style="left:854.80px;top:218.50px;font-size:19.5px;line-height:24px;color:#999;transform:scaleX(0.9398);">4,811</div>
<div class="t" style="left:980.00px;top:218.50px;font-size:19.5px;line-height:24px;color:#999;transform:scaleX(0.9548);">€127.13</div>
<div class="t" style="left:1053.00px;top:227.00px;font-size:10.5px;line-height:13px;color:#999;transform:scaleX(0.8862);">Tax excl.</div>
<div class="t" style="left:1157.90px;top:218.50px;font-size:19.5px;line-height:24px;color:#999;transform:scaleX(0.9519);">288,893</div>
<div class="t" style="left:1323.00px;top:218.50px;font-size:19.5px;line-height:24px;color:#999;transform:scaleX(0.9133);">1.67%</div>
<div class="t" style="left:1437.50px;top:218.50px;font-size:19.5px;line-height:24px;color:#999;transform:scaleX(0.9443);">€222,336.61</div>
<div class="t" style="left:1545.80px;top:227.00px;font-size:10.5px;line-height:13px;color:#999;transform:scaleX(0.8887);">Tax excl.</div>
<svg class="a" style="left:0;top:0" width="1875" height="1055" viewBox="0 0 1875 1055"><line x1="738" y1="332.4" x2="1547" y2="332.4" stroke="#e5e5e5" stroke-width="1"/><line x1="738" y1="381.8" x2="1547" y2="381.8" stroke="#e5e5e5" stroke-width="1"/><line x1="738" y1="431.3" x2="1547" y2="431.3" stroke="#e5e5e5" stroke-width="1"/><line x1="738" y1="481.1" x2="1547" y2="481.1" stroke="#e5e5e5" stroke-width="1"/><line x1="738" y1="530.5" x2="1547" y2="530.5" stroke="#e5e5e5" stroke-width="1"/><line x1="899.5" y1="295" x2="899.5" y2="565" stroke="#e5e5e5" stroke-width="1"/><line x1="1055.8" y1="295" x2="1055.8" y2="565" stroke="#e5e5e5" stroke-width="1"/><line x1="1211.7" y1="295" x2="1211.7" y2="565" stroke="#e5e5e5" stroke-width="1"/><line x1="1367.8" y1="295" x2="1367.8" y2="565" stroke="#e5e5e5" stroke-width="1"/><line x1="738" y1="294.5" x2="738" y2="565" stroke="#aaa" stroke-width="1.2"/><polyline points="738.2,564.5 764.5,547 791.5,533.7 818.5,440.4 845.5,454.8 872.5,401.5 899.5,458.3 926.5,481.1 953.5,371.7 980,517.5 1007,561.7 1034,506.7 1061,294.5 1088,512 1115.2,485.6 1141.9,480.4 1168.9,527.4 1195.9,459.8 1222.9,509.6 1250,520.4 1277,493.4 1304,527 1330.6,509.2 1357.6,488.2 1384.6,415.2 1411.6,534.1 1438.3,509.9 1465.3,415.2 1492.3,499.4 1519.3,441.9 1546.3,493.8" fill="none" stroke="#1777b6" stroke-width="1.6" stroke-linejoin="round"/><circle cx="738.2" cy="564.5" r="2.6" fill="#6aa4d0" fill-opacity=".8"/><circle cx="764.5" cy="547" r="2.6" fill="#6aa4d0" fill-opacity=".8"/><circle cx="791.5" cy="533.7" r="2.6" fill="#6aa4d0" fill-opacity=".8"/><circle cx="818.5" cy="440.4" r="2.6" fill="#6aa4d0" fill-opacity=".8"/><circle cx="845.5" cy="454.8" r="2.6" fill="#6aa4d0" fill-opacity=".8"/><circle cx="872.5" cy="401.5" r="2.6" fill="#6aa4d0" fill-opacity=".8"/><circle cx="899.5" cy="458.3" r="2.6" fill="#6aa4d0" fill-opacity=".8"/><circle cx="926.5" cy="481.1" r="2.6" fill="#6aa4d0" fill-opacity=".8"/><circle cx="953.5" cy="371.7" r="2.6" fill="#6aa4d0" fill-opacity=".8"/><circle cx="980" cy="517.5" r="2.6" fill="#6aa4d0" fill-opacity=".8"/><circle cx="1007" cy="561.7" r="2.6" fill="#6aa4d0" fill-opacity=".8"/><circle cx="1034" cy="506.7" r="2.6" fill="#6aa4d0" fill-opacity=".8"/><circle cx="1061" cy="294.5" r="2.6" fill="#6aa4d0" fill-opacity=".8"/><circle cx="1088" cy="512" r="2.6" fill="#6aa4d0" fill-opacity=".8"/><circle cx="1115.2" cy="485.6" r="2.6" fill="#6aa4d0" fill-opacity=".8"/><circle cx="1141.9" cy="480.4" r="2.6" fill="#6aa4d0" fill-opacity=".8"/><circle cx="1168.9" cy="527.4" r="2.6" fill="#6aa4d0" fill-opacity=".8"/><circle cx="1195.9" cy="459.8" r="2.6" fill="#6aa4d0" fill-opacity=".8"/><circle cx="1222.9" cy="509.6" r="2.6" fill="#6aa4d0" fill-opacity=".8"/><circle cx="1250" cy="520.4" r="2.6" fill="#6aa4d0" fill-opacity=".8"/><circle cx="1277" cy="493.4" r="2.6" fill="#6aa4d0" fill-opacity=".8"/><circle cx="1304" cy="527" r="2.6" fill="#6aa4d0" fill-opacity=".8"/><circle cx="1330.6" cy="509.2" r="2.6" fill="#6aa4d0" fill-opacity=".8"/><circle cx="1357.6" cy="488.2" r="2.6" fill="#6aa4d0" fill-opacity=".8"/><circle cx="1384.6" cy="415.2" r="2.6" fill="#6aa4d0" fill-opacity=".8"/><circle cx="1411.6" cy="534.1" r="2.6" fill="#6aa4d0" fill-opacity=".8"/><circle cx="1438.3" cy="509.9" r="2.6" fill="#6aa4d0" fill-opacity=".8"/><circle cx="1465.3" cy="415.2" r="2.6" fill="#6aa4d0" fill-opacity=".8"/><circle cx="1492.3" cy="499.4" r="2.6" fill="#6aa4d0" fill-opacity=".8"/><circle cx="1519.3" cy="441.9" r="2.6" fill="#6aa4d0" fill-opacity=".8"/><circle cx="1546.3" cy="493.8" r="2.6" fill="#6aa4d0" fill-opacity=".8"/><circle cx="1488.7" cy="279.8" r="5.6" fill="#1777b6"/></svg>
<div class="t" style="left:1497.00px;top:272.00px;font-size:12.5px;line-height:16px;color:#000;transform:scaleX(0.9371);">Sales</div>
<div class="t" style="left:701.35px;top:287.70px;font-size:12px;line-height:15px;color:#000;">57524</div>
<div class="t" style="left:701.35px;top:325.60px;font-size:12px;line-height:15px;color:#000;">50000</div>
<div class="t" style="left:701.35px;top:375.00px;font-size:12px;line-height:15px;color:#000;">40000</div>
<div class="t" style="left:701.35px;top:424.50px;font-size:12px;line-height:15px;color:#000;">30000</div>
<div class="t" style="left:701.35px;top:474.30px;font-size:12px;line-height:15px;color:#000;">20000</div>
<div class="t" style="left:701.35px;top:523.70px;font-size:12px;line-height:15px;color:#000;">10000</div>
<div class="t" style="left:708.02px;top:557.70px;font-size:12px;line-height:15px;color:#000;">3162</div>
<div class="t" style="left:714.64px;top:570.00px;font-size:12px;line-height:15px;color:#000;">6/7/2020</div>
<div class="t" style="left:872.81px;top:570.00px;font-size:12px;line-height:15px;color:#000;">6/13/2020</div>
<div class="t" style="left:1029.11px;top:570.00px;font-size:12px;line-height:15px;color:#000;">6/18/2020</div>
<div class="t" style="left:1185.01px;top:570.00px;font-size:12px;line-height:15px;color:#000;">6/24/2020</div>
<div class="t" style="left:1341.11px;top:570.00px;font-size:12px;line-height:15px;color:#000;">6/30/2020</div>
<div class="a" style="left:1500px;top:560px;width:67px;height:30px;overflow:hidden"><div class="t" style="left:24px;top:9px;font-size:12px;line-height:15px;color:#000">7/7/2020</div></div>
<div class="a" style="left:637px;top:656px;width:471px;height:74px;background:#fff;border:1px solid #d9e2e5;border-radius:5px;box-shadow:0 1px 2px rgba(0,0,0,.06);"></div>
<div class="a" style="left:648px;top:667px;width:130.5px;height:40px;border:1px solid #c8c8c8;border-radius:2px;background:#fff"></div>
<svg class="a" style="left:686px;top:672px" width="54" height="30" viewBox="0 0 54 30"><path d="M3 1.5 H50 Q52.5 1.5 52.5 4 V20 Q52.5 22.5 50 22.5 H20 L13 28.5 V22.5 H3 Q0.8 22.5 0.8 20 V4 Q0.8 1.5 3 1.5z" fill="#fff" stroke="#333" stroke-width="1.6"/></svg>
<div class="t" style="left:690.00px;top:677.00px;font-size:12px;line-height:15px;color:#333;font-weight:bold;transform:scaleX(0.7913);">Live</div>
<div class="t" style="left:709.00px;top:677.00px;font-size:12px;line-height:15px;color:#f47a3c;font-weight:bold;transform:scaleX(0.9750);">Chat</div>
<div class="t" style="left:799.00px;top:670.70px;font-size:13px;line-height:16px;color:#00aff0;transform:scaleX(0.9669);">Increase sales through real-time conversations</div>
<div class="t" style="left:799.00px;top:687.60px;font-size:13px;line-height:16px;color:#00aff0;transform:scaleX(0.9839);">with your website visitors.</div>
<div class="a" style="left:1118px;top:656px;width:470px;height:74px;background:#fff;border:1px solid #d9e2e5;border-radius:5px;box-shadow:0 1px 2px rgba(0,0,0,.06);"></div>
<div class="a" style="left:1129px;top:667.2px;width:113.7px;height:36.4px;border:1px solid #c8c8c8;border-radius:2px;background:#fff"></div>
<svg class="a" style="left:1161px;top:675px" width="20" height="20" viewBox="0 0 20 20"><circle cx="10" cy="10" r="8" stroke="#f26b3a" stroke-width="2.6" fill="none" stroke-dasharray="30 4"/><path d="M7 6.5 Q10 4.5 12.5 6.5 Q13 9 10 10 Q13 11 12 13.5 Q10 15 7.5 13.5" stroke="#f26b3a" stroke-width="1.8" fill="none"/></svg>
<div class="t" style="left:1183.20px;top:675.50px;font-size:14px;line-height:18px;color:#333;font-weight:bold;transform:scaleX(0.9841);">NS8</div>
<div class="t" style="left:1262.90px;top:668.70px;font-size:13px;line-height:16px;color:#00aff0;transform:scaleX(0.9810);">Accept orders confidently with our simple and</div>
<div class="t" style="left:1262.90px;top:685.60px;font-size:13px;line-height:16px;color:#00aff0;transform:scaleX(0.9929);">customizable fraud prevention platform.</div>
<div class="a" style="left:637px;top:751px;width:951px;height:400px;background:#fff;border:1px solid #d9e2e5;border-radius:5px;box-shadow:0 1px 2px rgba(0,0,0,.06);"></div>
<div class="a" style="left:642px;top:783px;width:942px;height:1px;background:#eef1f2"></div>
<svg class="a" style="left:646.8px;top:760.5px" width="16" height="13" viewBox="0 0 16 13"><path d="M1 0.5 V12 H15.5" stroke="#555" stroke-width="1.4" fill="none"/><rect x="3.5" y="6" width="2" height="5" fill="#555"/><rect x="6.8" y="3" width="2" height="8" fill="#555"/><rect x="10.1" y="5" width="2" height="6" fill="#555"/><rect x="13.2" y="1.5" width="2" height="9.5" fill="#555"/></svg>
<div class="t" style="left:666.90px;top:758.50px;font-size:13.6px;line-height:17px;color:#555;transform:scaleX(0.7080);-webkit-text-stroke:0.35px #555">FORECAST</div>
<div class="a" style="left:1527px;top:753px;width:1px;height:30px;background:#eef1f2"></div>
<div class="a" style="left:1557px;top:753px;width:1px;height:30px;background:#eef1f2"></div>
<svg class="a" style="left:1535px;top:760px" width="16" height="16" viewBox="0 0 16 16"><rect x="6.5" y="0.2" width="3" height="3.5" fill="#bbb" transform="rotate(0 8 8)"/><rect x="6.5" y="0.2" width="3" height="3.5" fill="#bbb" transform="rotate(45 8 8)"/><rect x="6.5" y="0.2" width="3" height="3.5" fill="#bbb" transform="rotate(90 8 8)"/><rect x="6.5" y="0.2" width="3" height="3.5" fill="#bbb" transform="rotate(135 8 8)"/><rect x="6.5" y="0.2" width="3" height="3.5" fill="#bbb" transform="rotate(180 8 8)"/><rect x="6.5" y="0.2" width="3" height="3.5" fill="#bbb" transform="rotate(225 8 8)"/><rect x="6.5" y="0.2" width="3" height="3.5" fill="#bbb" transform="rotate(270 8 8)"/><rect x="6.5" y="0.2" width="3" height="3.5" fill="#bbb" transform="rotate(315 8 8)"/><circle cx="8" cy="8" r="5.6" fill="#bbb"/><circle cx="8" cy="8" r="2.5" fill="#fff"/></svg>
<svg class="a" style="left:1564.5px;top:760px" width="17" height="17" viewBox="0 0 16 16"><path d="M13.6 6.2 A6 6 0 0 0 2.6 5 M2.4 9.8 A6 6 0 0 0 13.4 11" stroke="#b5b5b5" stroke-width="2.2" fill="none"/><path d="M15.5 1.8 V7.5 H9.8z M0.5 14.2 V8.5 H6.2z" fill="#b5b5b5"/></svg>
<div class="a" style="left:728px;top:757.5px;width:51.3px;height:19px;border:1px solid #bbcdd2;border-radius:10px;background:#fff"></div>
<div class="t" style="left:739.30px;top:758.00px;font-size:14.5px;line-height:18px;color:#363a41;transform:scaleX(0.8866);letter-spacing:1px">2020</div>
<div class="a" style="left:783.5px;top:758px;width:60px;height:26px;border:1px solid #d5dde0;border-radius:3px;background:#fff"></div>
<div class="a" style="left:813.3px;top:758px;width:1px;height:26px;background:#d5dde0"></div>
<svg class="a" style="left:792.5px;top:764px" width="14" height="12" viewBox="0 0 14 12"><path d="M7 0.5 V11.5 L0.5 6z M13.5 0.5 V11.5 L7 6z" fill="#4a4a4a"/></svg>
<svg class="a" style="left:821px;top:764px" width="14" height="12" viewBox="0 0 14 12"><path d="M0.5 0.5 V11.5 L7 6z M7 0.5 V11.5 L13.5 6z" fill="#363a41"/></svg>
<div class="a" style="left:658.5px;top:799px;width:361.5px;height:31px;border:1px solid #d0d0d0;border-radius:3px;background:#fff"></div>
<div class="a" style="left:958.5px;top:799px;width:61.5px;height:31px;background:#dedede;border:1px solid #c9c9c9;border-radius:0 3px 3px 0"></div>
<div class="a" style="left:725.5px;top:800px;width:1px;height:29px;background:#d8d8d8"></div>
<div class="a" style="left:821.2px;top:800px;width:1px;height:29px;background:#d8d8d8"></div>
<div class="a" style="left:667.0px;top:808.7px;width:11.6px;height:11.6px;border-radius:6px;background:#9a5aa0"></div>
<div class="t" style="left:682.50px;top:807.00px;font-size:13px;line-height:16px;color:#363a41;transform:scaleX(0.9747);">Traffic</div>
<div class="a" style="left:734.2px;top:808.7px;width:11.6px;height:11.6px;border-radius:6px;background:#00a19a"></div>
<div class="t" style="left:749.60px;top:807.00px;font-size:13px;line-height:16px;color:#363a41;transform:scaleX(0.9535);">Conversion</div>
<div class="a" style="left:829.5px;top:808.7px;width:11.6px;height:11.6px;border-radius:6px;background:#3bb3e8"></div>
<div class="t" style="left:845.00px;top:807.00px;font-size:13px;line-height:16px;color:#363a41;transform:scaleX(0.9354);">Average Cart Value</div>
<div class="a" style="left:967.2px;top:808.7px;width:11.6px;height:11.6px;border-radius:6px;background:#f7833b"></div>
<div class="t" style="left:982.80px;top:807.00px;font-size:13px;line-height:16px;color:#363a41;transform:scaleX(0.8672);">Sales</div>
<svg class="a" style="left:0;top:0" width="1875" height="1055" viewBox="0 0 1875 1055"><line x1="718" y1="1030" x2="1546" y2="1030" stroke="#e5e5e5" stroke-width="1"/><line x1="718" y1="1003.4" x2="1546" y2="1003.4" stroke="#e5e5e5" stroke-width="1"/><line x1="718" y1="977.1" x2="1546" y2="977.1" stroke="#e5e5e5" stroke-width="1"/><line x1="718" y1="950.8" x2="1546" y2="950.8" stroke="#e5e5e5" stroke-width="1"/><line x1="718" y1="924.5" x2="1546" y2="924.5" stroke="#e5e5e5" stroke-width="1"/><line x1="718" y1="898.2" x2="1546" y2="898.2" stroke="#e5e5e5" stroke-width="1"/><line x1="718" y1="871.9" x2="1546" y2="871.9" stroke="#e5e5e5" stroke-width="1"/><line x1="824.3" y1="850" x2="824.3" y2="1030" stroke="#e5e5e5" stroke-width="1"/><line x1="961.3" y1="850" x2="961.3" y2="1030" stroke="#e5e5e5" stroke-width="1"/><line x1="1098.3" y1="850" x2="1098.3" y2="1030" stroke="#e5e5e5" stroke-width="1"/><line x1="1235.2" y1="850" x2="1235.2" y2="1030" stroke="#e5e5e5" stroke-width="1"/><line x1="1372" y1="850" x2="1372" y2="1030" stroke="#e5e5e5" stroke-width="1"/><line x1="1509" y1="850" x2="1509" y2="1030" stroke="#e5e5e5" stroke-width="1"/><rect x="725.3" y="945.2" width="61.5" height="84.8" fill="#fbc47a"/><rect x="725.3" y="956" width="61.5" height="74.0" fill="#f9aa6d"/><line x1="725.3" y1="956" x2="786.8" y2="956" stroke="#f6863f" stroke-width="1.2"/><rect x="793.8" y="908" width="61.5" height="122.0" fill="#f8935f"/><rect x="793.8" y="935.7" width="61.5" height="94.3" fill="#f9aa6d"/><rect x="862.2" y="889.4" width="61.5" height="140.6" fill="#f8935f"/><rect x="862.2" y="928" width="61.5" height="102.0" fill="#f9aa6d"/><rect x="930.6" y="911" width="61.5" height="119.0" fill="#f8935f"/><rect x="930.6" y="918" width="61.5" height="112.0" fill="#f9aa6d"/><rect x="999.1" y="911.2" width="61.5" height="118.8" fill="#fbc47a"/><rect x="999.1" y="961.3" width="61.5" height="68.7" fill="#f9aa6d"/><line x1="999.1" y1="961.3" x2="1060.6" y2="961.3" stroke="#f6863f" stroke-width="1.2"/><rect x="1067.5" y="901.5" width="61.5" height="128.5" fill="#fbc47a"/><rect x="1067.5" y="947.2" width="61.5" height="82.8" fill="#f9aa6d"/><line x1="1067.5" y1="947.2" x2="1129.0" y2="947.2" stroke="#f6863f" stroke-width="1.2"/><rect x="1136.0" y="892.2" width="61.5" height="137.8" fill="#fbc47a"/><rect x="1136.0" y="917.8" width="61.5" height="112.2" fill="#f9aa6d"/><line x1="1136.0" y1="917.8" x2="1197.5" y2="917.8" stroke="#f6863f" stroke-width="1.2"/><rect x="1204.5" y="884.4" width="61.5" height="145.6" fill="#fbc47a"/><rect x="1204.5" y="939.2" width="61.5" height="90.8" fill="#f9aa6d"/><line x1="1204.5" y1="939.2" x2="1266.0" y2="939.2" stroke="#f6863f" stroke-width="1.2"/><rect x="1272.9" y="876.5" width="61.5" height="153.5" fill="#fbc47a"/><rect x="1272.9" y="903.4" width="61.5" height="126.6" fill="#f9aa6d"/><line x1="1272.9" y1="903.4" x2="1334.4" y2="903.4" stroke="#f6863f" stroke-width="1.2"/><rect x="1341.3" y="867.1" width="61.5" height="162.9" fill="#fbc47a"/><rect x="1341.3" y="923" width="61.5" height="107.0" fill="#f9aa6d"/><line x1="1341.3" y1="923" x2="1402.8" y2="923" stroke="#f6863f" stroke-width="1.2"/><rect x="1409.8" y="858" width="61.5" height="172.0" fill="#fbc47a"/><rect x="1409.8" y="944.2" width="61.5" height="85.8" fill="#f9aa6d"/><line x1="1409.8" y1="944.2" x2="1471.3" y2="944.2" stroke="#f6863f" stroke-width="1.2"/><rect x="1478.2" y="849.9" width="61.5" height="180.1" fill="#fbc47a"/><rect x="1478.2" y="929.6" width="61.5" height="100.4" fill="#f9aa6d"/><line x1="1478.2" y1="929.6" x2="1539.8" y2="929.6" stroke="#f6863f" stroke-width="1.2"/><line x1="718" y1="850" x2="718" y2="1030" stroke="#aaa" stroke-width="1.2"/></svg>
<div class="t" style="left:697.52px;top:842.50px;font-size:12px;line-height:15px;color:#000;">1.4</div>
<div class="t" style="left:697.52px;top:864.40px;font-size:12px;line-height:15px;color:#000;">1.2</div>
<div class="t" style="left:697.52px;top:890.70px;font-size:12px;line-height:15px;color:#000;">1.0</div>
<div class="t" style="left:697.52px;top:917.00px;font-size:12px;line-height:15px;color:#000;">0.8</div>
<div class="t" style="left:697.52px;top:943.30px;font-size:12px;line-height:15px;color:#000;">0.6</div>
<div class="t" style="left:697.52px;top:969.60px;font-size:12px;line-height:15px;color:#000;">0.4</div>
<div class="t" style="left:697.52px;top:995.90px;font-size:12px;line-height:15px;color:#000;">0.2</div>
<div class="t" style="left:697.52px;top:1022.20px;font-size:12px;line-height:15px;color:#000;">0.0</div>
<div class="t" style="left:800.29px;top:1034.50px;font-size:12px;line-height:15px;color:#000;">February</div>
<div class="t" style="left:949.30px;top:1034.50px;font-size:12px;line-height:15px;color:#000;">April</div>
<div class="t" style="left:1085.29px;top:1034.50px;font-size:12px;line-height:15px;color:#000;">June</div>
<div class="t" style="left:1216.52px;top:1034.50px;font-size:12px;line-height:15px;color:#000;">August</div>
<div class="t" style="left:1350.66px;top:1034.50px;font-size:12px;line-height:15px;color:#000;">October</div>
<div class="t" style="left:1481.32px;top:1034.50px;font-size:12px;line-height:15px;color:#000;">December</div>
<div class="a" style="left:1598px;top:139.5px;width:265px;height:394px;background:#fff;border:1px solid #d9e2e5;border-radius:5px;box-shadow:0 1px 2px rgba(0,0,0,.06);"></div>
<div class="a" style="left:1603px;top:170px;width:256px;height:1px;background:#eef1f2"></div>
<svg class="a" style="left:1608px;top:149px" width="11" height="11" viewBox="0 0 11 11"><circle cx="1.6" cy="9.4" r="1.6" fill="#555"/><path d="M0.5 4.6 A5.9 5.9 0 0 1 6.4 10.5 M0.5 1 A9.5 9.5 0 0 1 10 10.5" stroke="#555" stroke-width="1.8" fill="none"/></svg>
<div class="t" style="left:1622.50px;top:145.50px;font-size:13.6px;line-height:17px;color:#555;transform:scaleX(0.7585);-webkit-text-stroke:0.35px #555">PRESTASHOP NEWS</div>
<div class="t" style="left:1619.60px;top:184.10px;font-size:15px;line-height:19px;color:#25b9d7;transform:scaleX(0.7896);-webkit-text-stroke:0.25px #25b9d7">E-commerce: The KPIs you should</div>
<div class="t" style="left:1619.60px;top:200.00px;font-size:15px;line-height:19px;color:#25b9d7;transform:scaleX(0.8877);-webkit-text-stroke:0.25px #25b9d7">monitor</div>
<div class="t" style="left:1619.60px;top:226.20px;font-size:12.5px;line-height:16px;color:#999;transform:scaleX(1.0166);">08/17/2020</div>
<div class="t" style="left:1619.60px;top:243.30px;font-size:12.5px;line-height:16px;color:#363a41;transform:scaleX(1.0039);">Data is the most valuable source of</div>
<div class="t" style="left:1619.60px;top:260.30px;font-size:12.5px;line-height:16px;color:#363a41;transform:scaleX(1.0327);">information to help you maximise your</div>
<div class="t" style="left:1619.60px;top:277.30px;font-size:12.5px;line-height:16px;color:#363a41;">e-commerce conversions.</div>
<div class="t" style="left:1766.30px;top:277.30px;font-size:12.5px;line-height:16px;color:#25b9d7;transform:scaleX(0.9752);">Read more</div>
<div class="a" style="left:1619.6px;top:311px;width:222.4px;height:1px;background:#e5e9ea"></div>
<div class="t" style="left:1619.60px;top:327.50px;font-size:15px;line-height:19px;color:#25b9d7;transform:scaleX(0.8169);-webkit-text-stroke:0.25px #25b9d7">Important stages of a business: why do</div>
<div class="t" style="left:1619.60px;top:343.40px;font-size:15px;line-height:19px;color:#25b9d7;transform:scaleX(0.8164);-webkit-text-stroke:0.25px #25b9d7">you have to climb to win?</div>
<div class="t" style="left:1619.60px;top:370.40px;font-size:12.5px;line-height:16px;color:#999;transform:scaleX(1.0166);">08/17/2020</div>
<div class="t" style="left:1619.60px;top:387.40px;font-size:12.5px;line-height:16px;color:#363a41;transform:scaleX(0.9750);">All businesses have a life cycle. There is</div>
<div class="t" style="left:1619.60px;top:404.40px;font-size:12.5px;line-height:16px;color:#363a41;transform:scaleX(1.0078);">the initial phase, where it's just an idea,</div>
<div class="t" style="left:1619.60px;top:421.40px;font-size:12.5px;line-height:16px;color:#363a41;transform:scaleX(1.0105);">a stroke of genius in the mind of an</div>
<div class="t" style="left:1619.60px;top:438.10px;font-size:12.5px;line-height:16px;color:#363a41;transform:scaleX(1.0301);">entrepreneur, merely im...</div>
<div class="t" style="left:1769.30px;top:438.10px;font-size:12.5px;line-height:16px;color:#25b9d7;transform:scaleX(0.9865);">Read more</div>
<div class="a" style="left:1619.6px;top:472.3px;width:222.4px;height:1px;background:#e5e9ea"></div>
<div class="t" style="left:1688.00px;top:488.30px;font-size:15px;line-height:19px;color:#25b9d7;transform:scaleX(0.8031);-webkit-text-stroke:0.25px #25b9d7">Find more news</div>
<div class="a" style="left:1598px;top:555.5px;width:265px;height:84.5px;background:#fff;border:1px solid #d9e2e5;border-radius:5px;box-shadow:0 1px 2px rgba(0,0,0,.06);"></div>
<div class="a" style="left:1599px;top:584px;width:263px;height:1px;background:#dbe0e2"></div>
<svg class="a" style="left:1612px;top:564px" width="18" height="13" viewBox="0 0 18 13"><path d="M3 12 V3.5 H11" stroke="#363a41" stroke-width="2.2" fill="none"/><path d="M0 5 L3 1 L6 5z" fill="#363a41"/><path d="M15 1 V9.5 H7" stroke="#363a41" stroke-width="2.2" fill="none"/><path d="M12 8 L15 12 L18 8z" fill="#363a41"/></svg>
<div class="t" style="left:1634.60px;top:562.50px;font-size:13px;line-height:16px;color:#363a41;transform:scaleX(0.8852);">PRESTASHOP UPDATES</div>
<div class="t" style="left:1606.70px;top:589.50px;font-size:13px;line-height:16px;color:#000;transform:scaleX(0.9652);">Your PrestaShop version is up to date</div>
<div class="a" style="left:1598px;top:661px;width:265px;height:238px;background:#fff;border:1px solid #d9e2e5;border-radius:5px;box-shadow:0 1px 2px rgba(0,0,0,.06);"></div>
<div class="a" style="left:1603px;top:693px;width:256px;height:1px;background:#eef1f2"></div>
<svg class="a" style="left:1608.5px;top:670px" width="13" height="13" viewBox="0 0 13 13"><rect x="0.8" y="0.8" width="6" height="4.2" rx="2.1" transform="rotate(45 3.8 2.9)" stroke="#555" stroke-width="1.5" fill="none"/><rect x="6" y="6" width="6" height="4.2" rx="2.1" transform="rotate(45 9 8.1)" stroke="#555" stroke-width="1.5" fill="none"/></svg>
<div class="t" style="left:1624.60px;top:667.90px;font-size:13.6px;line-height:17px;color:#555;transform:scaleX(0.7625);-webkit-text-stroke:0.35px #555">WE STAY BY YOUR SIDE!</div>
<div class="t" style="left:1619.00px;top:709.80px;font-size:13px;line-height:16px;color:#00aff0;font-weight:bold;transform:scaleX(0.9772);">Help Center</div>
<div class="t" style="left:1619.00px;top:726.90px;font-size:13px;line-height:16px;color:#363a41;transform:scaleX(0.9860);">Documentation, support, experts,</div>
<div class="t" style="left:1619.00px;top:743.80px;font-size:13px;line-height:16px;color:#363a41;transform:scaleX(0.9646);">training... PrestaShop and all of its</div>
<div class="t" style="left:1619.00px;top:760.80px;font-size:13px;line-height:16px;color:#363a41;transform:scaleX(0.9824);">community are here to guide you</div>
<div class="t" style="left:1619.00px;top:794.50px;font-size:13px;line-height:16px;color:#00aff0;font-weight:bold;transform:scaleX(0.9735);">PrestaShop Marketplace</div>
<div class="t" style="left:1619.00px;top:811.70px;font-size:13px;line-height:16px;color:#363a41;transform:scaleX(0.9782);">Traffic, conversion rate, customer</div>
<div class="t" style="left:1619.00px;top:828.60px;font-size:13px;line-height:16px;color:#363a41;transform:scaleX(0.9681);">loyalty... Increase your sales with all of</div>
<div class="t" style="left:1619.00px;top:845.60px;font-size:13px;line-height:16px;color:#363a41;transform:scaleX(0.9677);">the PrestaShop modules and themes</div>
</body></html>
